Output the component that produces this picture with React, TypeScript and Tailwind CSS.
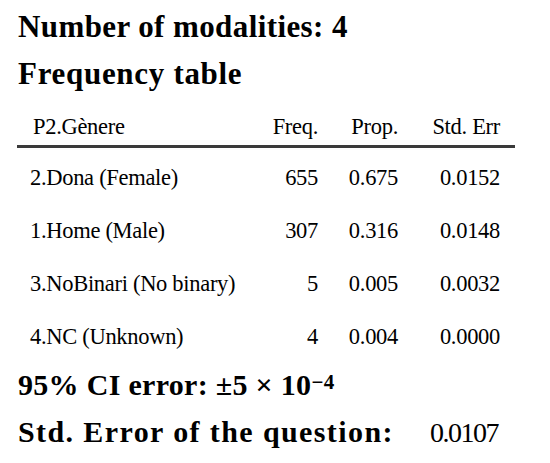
const rows = [
  { label: "2.Dona (Female)", freq: "655", prop: "0.675", err: "0.0152" },
  { label: "1.Home (Male)", freq: "307", prop: "0.316", err: "0.0148" },
  { label: "3.NoBinari (No binary)", freq: "5", prop: "0.005", err: "0.0032" },
  { label: "4.NC (Unknown)", freq: "4", prop: "0.004", err: "0.0000" },
];

const cols = "grid grid-cols-[228px_60px_80px_102px] pl-[13px] pr-[15px]";

export default function App() {
  return (
    <div className="w-[550px] h-[463px] bg-white text-black overflow-hidden pl-[18px] pt-[3px] font-[family-name:'Liberation_Serif',serif]">
      <h1 className="text-[31px] leading-[47px] font-bold tracking-[0.4px]">Number of modalities: 4</h1>
      <h2 className="text-[31px] leading-[47px] font-bold tracking-[0.7px]">Frequency table</h2>

      <div className="mt-[11px] w-[498px] -ml-[1px] text-[22.5px] tracking-[-0.3px]">
        <div className={`${cols} h-[40px] leading-[38px] border-b-[3px] border-[#3a3a3a]`}>
          <span className="pl-[3px]">P2.Gènere</span>
          <span className="text-right">Freq.</span>
          <span className="text-right">Prop.</span>
          <span className="text-right">Std. Err</span>
        </div>
        <div className="pt-[3px]">
          {rows.map((r) => (
            <div key={r.label} className={`${cols} h-[53px] leading-[53px]`}>
              <span>{r.label}</span>
              <span className="text-right">{r.freq}</span>
              <span className="text-right">{r.prop}</span>
              <span className="text-right">{r.err}</span>
            </div>
          ))}
        </div>
      </div>

      <p className="-mt-[2px] text-[30px] leading-[47px] font-bold tracking-[0.3px]">
        95% CI error: ±5 × 10<sup className="text-[21px] relative -top-[6px]">−4</sup>
      </p>
      <p className="text-[30px] leading-[47px]">
        <span className="font-bold tracking-[1.4px]">Std. Error of the question:</span>
        <span className="ml-[36px] text-[28px] tracking-[-1.5px]">0.0107</span>
      </p>
    </div>
  );
}
